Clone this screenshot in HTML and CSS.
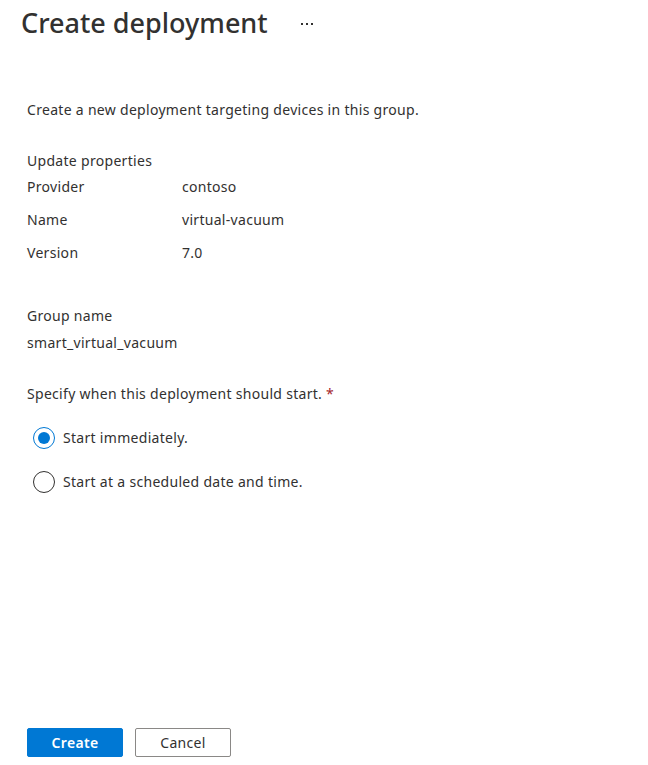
FILE: index.html
```html
<!DOCTYPE html>
<html lang="en">
<head>
<meta charset="utf-8">
<title>Create deployment</title>
<link rel="stylesheet" href="styles.css">
</head>
<body>
<div class="page">
  <header class="header">
    <h1 class="title">Create deployment</h1>
    <button class="more" aria-label="More actions">
      <svg width="12" height="2" viewBox="0 0 12 2"><rect x="0" y="0" width="2" height="2" fill="#323130"/><rect x="5" y="0" width="2" height="2" fill="#323130"/><rect x="10" y="0" width="2" height="2" fill="#323130"/></svg>
    </button>
  </header>
  <main class="content">
    <p class="desc">Create a new deployment targeting devices in this group.</p>
    <section class="props">
      <div class="props-title">Update properties</div>
      <div class="prop-row"><span class="prop-label">Provider</span><span class="prop-value">contoso</span></div>
      <div class="prop-row"><span class="prop-label">Name</span><span class="prop-value">virtual-vacuum</span></div>
      <div class="prop-row"><span class="prop-label">Version</span><span class="prop-value">7.0</span></div>
    </section>
    <section class="group">
      <div class="group-label">Group name</div>
      <div class="group-value">smart_virtual_vacuum</div>
    </section>
    <section class="start">
      <div class="start-label">Specify when this deployment should start. <span class="req">*</span></div>
      <div class="radios">
        <label class="radio"><span class="radio-circle checked"></span><span class="radio-text">Start immediately.</span></label>
        <label class="radio"><span class="radio-circle"></span><span class="radio-text">Start at a scheduled date and time.</span></label>
      </div>
    </section>
  </main>
  <footer class="footer">
    <button class="btn btn-primary">Create</button>
    <button class="btn btn-default">Cancel</button>
  </footer>
</div>
</body>
</html>
```
FILE: styles.css
```css
* { box-sizing: border-box; }
html, body { margin: 0; padding: 0; background: #ffffff; }
body {
  font-family: "Segoe UI", "Noto Sans", "Open Sans", sans-serif;
  font-size: 14px;
  line-height: 20px;
  letter-spacing: 0.3px;
  color: #323130;
}
.page {
  height: 765px;
  display: flex;
  flex-direction: column;
}
.header {
  display: flex;
  align-items: center;
  padding: 5px 0 0 21px;
  height: 41px;
}
.title {
  margin: 0;
  font-size: 27px;
  line-height: 36px;
  font-weight: 500;
  letter-spacing: 0;
  color: #323130;
}
.more {
  border: 0;
  background: transparent;
  padding: 0;
  margin-left: 33px;
  display: flex;
  align-items: center;
  height: 20px;
  margin-top: 2px;
}
.content {
  padding: 0 27px;
  flex: 1;
}
.desc { margin: 59px 0 0; }
.props { margin-top: 31px; }
.prop-row { display: flex; margin-top: 13px; }
.props-title + .prop-row { margin-top: 6px; }
.prop-label { width: 155px; }
.group { margin-top: 43px; }
.group-value { margin-top: 7px; }
.start { margin-top: 31px; }
.req { color: #a4262c; }
.radios { display: flex; flex-direction: column; gap: 24px; margin-top: 24px; }
.radio { display: flex; align-items: center; gap: 8px; padding-left: 6px; height: 20px; }
.radio-circle {
  width: 22px;
  height: 22px;
  border-radius: 50%;
  border: 1px solid #323130;
  display: flex;
  align-items: center;
  justify-content: center;
  flex: none;
}
.radio-circle.checked { border-color: #0078d4; }
.radio-circle.checked::after {
  content: "";
  width: 12px;
  height: 12px;
  border-radius: 50%;
  background: #0078d4;
}
.footer {
  display: flex;
  gap: 12px;
  padding: 0 27px 8px;
}
.btn {
  width: 96px;
  height: 29px;
  border-radius: 2px;
  font-family: inherit;
  font-size: 14px;
  letter-spacing: 0.3px;
  font-weight: 600;
  padding: 0;
}
.btn-primary { background: #0078d4; border: 1px solid #0078d4; color: #ffffff; }
.btn-default { background: #ffffff; border: 1px solid #8a8886; color: #323130; font-weight: 400; }
```
